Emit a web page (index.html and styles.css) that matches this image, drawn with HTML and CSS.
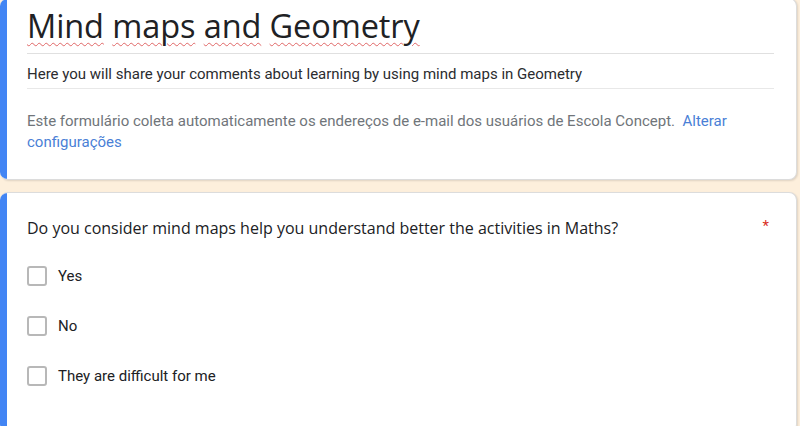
FILE: index.html
```html
<!DOCTYPE html>
<html lang="pt">
<head>
<meta charset="utf-8">
<link rel="stylesheet" href="styles.css">
</head>
<body>
<div class="page">
  <section class="card header-card">
    <div class="accent"></div>
    <div class="card-body">
      <h1 class="title"><span class="sp">Mind</span> <span class="sp">maps</span> <span class="sp">and</span> <span class="sp">Geometry</span></h1>
      <p class="desc">Here you will share your comments about learning by using mind maps in Geometry</p>
      <p class="notice">Este formulário coleta automaticamente os endereços de e-mail dos usuários de Escola Concept.&nbsp; <a class="link">Alterar</a> <a class="link">configurações</a></p>
    </div>
  </section>
  <section class="card question-card">
    <div class="accent"></div>
    <div class="card-body q-body">
      <div class="q-head">
        <span class="q-text">Do you consider mind maps help you understand better the activities in Maths?</span>
        <span class="req">*</span>
      </div>
      <ul class="options">
        <li class="option"><span class="box"></span><span class="opt-label">Yes</span></li>
        <li class="option"><span class="box"></span><span class="opt-label">No</span></li>
        <li class="option"><span class="box"></span><span class="opt-label">They are difficult for me</span></li>
      </ul>
    </div>
  </section>
</div>
</body>
</html>
```
FILE: styles.css
```css
* { box-sizing: border-box; }
html, body { margin: 0; padding: 0; }
body {
  background: #fdefdc;
  font-family: Roboto, "Liberation Sans", sans-serif;
  width: 800px;
  height: 426px;
  overflow: hidden;
}
.page {
  display: flex;
  flex-direction: column;
  gap: 12px;
  margin-top: -2px;
  padding-right: 3px;
}
.card {
  display: flex;
  background: #fff;
  border-radius: 8px;
  border: 1px solid #dcdcdc;
  border-left: none;
  box-shadow: 1px 1px 2px rgba(0,0,0,0.12);
  overflow: hidden;
}
.accent {
  width: 7px;
  flex: none;
  background: #4285f4;
}
.card-body {
  flex: 1;
  padding: 0 22px 0 20px;
}
.header-card { height: 182px; }
.title {
  margin: 0;
  padding-top: 5px;
  height: 55px;
  font-family: "Open Sans", sans-serif;
  font-weight: 400;
  font-size: 32.5px;
  line-height: 44px;
  color: #202124;
  letter-spacing: -0.1px;
  border-bottom: 1px solid #e0e0e0;
}
.sp {
  text-decoration: underline wavy #e06666;
  text-decoration-thickness: 1px;
  text-underline-offset: 4px;
}
.desc {
  margin: 0;
  height: 35px;
  padding-top: 10px;
  font-size: 15px;
  line-height: 20px;
  color: #2b2c2f;
  border-bottom: 1px solid #e8e8e8;
}
.notice {
  margin: 0;
  padding-top: 22px;
  font-size: 15px;
  line-height: 21px;
  color: #70757a;
}
.link { color: #4a7fd6; }
.question-card { height: 240px; }
.q-body { padding-top: 24px; }
.q-head {
  display: flex;
  justify-content: space-between;
  align-items: flex-start;
}
.q-text {
  font-family: "Open Sans", sans-serif;
  font-size: 16px;
  line-height: 22px;
  color: #202124;
}
.req {
  color: #d93025;
  font-size: 15px;
  margin-right: 5px;
  line-height: 18px;
}
.options {
  list-style: none;
  margin: 0;
  padding: 0;
  padding-top: 27px;
  display: flex;
  flex-direction: column;
  gap: 30px;
}
.option {
  display: flex;
  align-items: center;
  gap: 11px;
  height: 20px;
}
.box {
  width: 20px;
  height: 20px;
  border: 2px solid #b8b8b8;
  border-radius: 3px;
  flex: none;
}
.opt-label {
  font-size: 15px;
  color: #202124;
}
```
